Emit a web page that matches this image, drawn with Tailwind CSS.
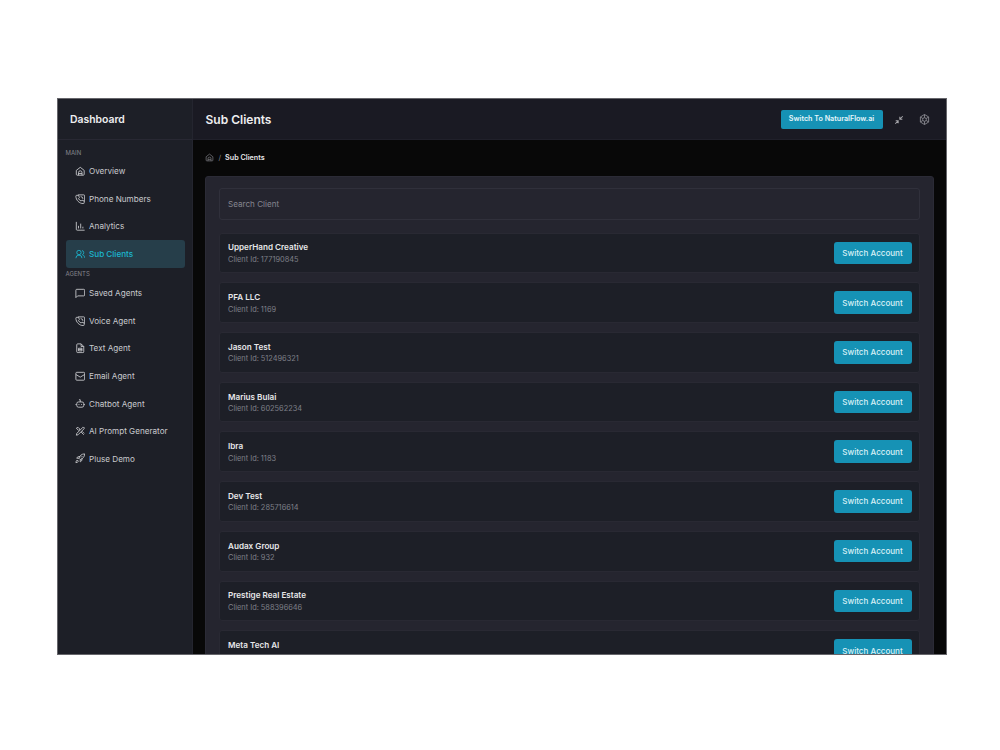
<!DOCTYPE html>
<html lang="en">
<head>
    <meta charset="UTF-8">
    <meta name="viewport" content="width=device-width, initial-scale=1">
    <title>Sub Clients</title>
    <script src="https://cdn.jsdelivr.net/npm/@tailwindcss/browser@4"></script>
</head>
<body class="bg-white font-['Inter',sans-serif]">
    <!-- Icons -->
    <svg class="hidden">
        <symbol id="home" viewBox="0 0 24 24"><path d="M3 10l9-7 9 7v9a2 2 0 0 1-2 2H5a2 2 0 0 1-2-2z"/><path d="M8 21v-6a4 4 0 0 1 8 0v6M8 17h8"/></symbol>
        <symbol id="phone" viewBox="0 0 24 24"><path d="M7 2h13a2 2 0 0 1 2 2v13M13 6a5 5 0 0 1 5 5"/><path d="M8 3H4a2 2 0 0 0-2 2c0 9 8 17 17 17a2 2 0 0 0 2-2v-4l-5-2-2 2c-3-1-5-3-6-6l2-2z"/></symbol>
        <symbol id="chart" viewBox="0 0 24 24"><path d="M3 2v17a2 2 0 0 0 2 2h17M8 17v-6M13 17V6M18 17v-4"/></symbol>
        <symbol id="users" viewBox="0 0 24 24"><circle cx="9" cy="8" r="5"/><path d="M2 21a7 7 0 0 1 14 0M16 3.500a5 5 0 0 1 1 9.500c3 1 5 4 5 7"/></symbol>
        <symbol id="message" viewBox="0 0 24 24"><path d="M22 16a2 2 0 0 1-2 2H6l-4 4V5a2 2 0 0 1 2-2h16a2 2 0 0 1 2 2z"/></symbol>
        <symbol id="file" viewBox="0 0 24 24"><path d="M14 2H6a2 2 0 0 0-2 2v16a2 2 0 0 0 2 2h12a2 2 0 0 0 2-2V8z"/><path d="M14 2v6h6M8 12h8v6H8zM8 15h8"/></symbol>
        <symbol id="mail" viewBox="0 0 24 24"><rect x="2" y="3" width="20" height="18" rx="2"/><path d="M2 8l10 6 10-6"/></symbol>
        <symbol id="bot" viewBox="0 0 24 24"><rect x="4" y="9" width="16" height="12" rx="4"/><path d="M12 9V4H9M1 15h3M20 15h3M9 14v2M15 14v2"/></symbol>
        <symbol id="tools" viewBox="0 0 24 24"><path d="M3 21l4-1L21 6l-3-3L4 17zM3 5l4-2 4 4-3 3zM14 14l6 6M16 12l5 5M19 2l3 3"/></symbol>
        <symbol id="rocket" viewBox="0 0 24 24"><path d="M12 15l-3-3c2-6 6-10 13-10 0 7-4 11-10 13zM9 12H4s1-5 8-4M12 15v5s5-1 4-8M5 16c-2 1-3 5-3 6 1 0 5-1 6-3z"/><path d="M14 10l3-3"/></symbol>
        <symbol id="shrink" viewBox="0 0 24 24"><path d="M14 4v6h6M14 10l7-7M10 20v-6H4M10 14l-7 7"/></symbol>
        <symbol id="gear" viewBox="0 0 24 24"><path d="M12 1l9 5.500v11L12 23l-9-5.500v-11z"/><circle cx="12" cy="12" r="4"/><path d="M12 1v7M12 16v7M3 6.500l5.500 3.500M21 6.500L15.500 10M3 17.500L8.500 14M21 17.500L15.500 14"/></symbol>
    </svg>

    <div class="mx-[57px] mt-[98px] h-[556.500px] w-[889.500px] flex overflow-hidden bg-[#080808] border border-[#66666b]">
        <!-- Sidebar -->
        <aside class="w-[135px] shrink-0 bg-[#1d1f27] border-r border-[#24252f]">
            <div class="h-[41px] pl-3 pt-px flex items-center border-b border-[#282833] text-[10.400px] font-semibold text-[#eeeef0]">Dashboard</div>
            <div class="pl-[7.500px] pr-[7px]">
                <div class="h-[17.700px] pt-[9px] text-[6px] leading-[7px] text-[#85868d]">MAIN</div>
                <nav id="main-nav"></nav>
                <div class="h-[11.800px] pt-[2px] text-[6px] leading-[7px] text-[#85868d]">AGENTS</div>
                <nav id="agents-nav"></nav>
            </div>
        </aside>

        <main class="flex-1 min-w-0">
            <header class="h-[41px] pl-[12.500px] pr-4 pt-px flex items-center bg-[#1a1a23] border-b border-[#20202a]">
                <h1 class="text-[12px] font-semibold text-[#eeeef0]">Sub Clients</h1>
                <button class="ml-auto h-[19.500px] w-[102px] rounded-xs bg-[#1692b5] text-[7.200px] font-semibold text-[#e6f6fa] whitespace-nowrap">Switch To NaturalFlow.ai</button>
                <svg class="ml-[11px] size-[10px] fill-none stroke-[#a5a5aa] stroke-[2.500]"><use href="#shrink"/></svg>
                <svg class="ml-[15px] size-[11px] fill-none stroke-[#85858c] stroke-2"><use href="#gear"/></svg>
            </header>

            <!-- Breadcrumb -->
            <div class="h-[35.500px] pl-3 pt-px flex items-center text-[7.200px] text-[#88888d]">
                <svg class="mb-px size-[9px] fill-none stroke-[#77777c] stroke-2"><use href="#home"/></svg>
                <span class="ml-[4.500px]">/</span>
                <span class="ml-[4px] font-semibold text-[#e5e5e7]">Sub Clients</span>
            </div>

            <section class="ml-3 w-[729px] h-[520px] rounded-[3px] bg-[#25252f] border border-[#2b2b36] pt-[11.500px] px-[13px]">
                <div class="h-[32px] rounded-[3px] border border-[#30303b] pl-2 pt-px flex items-center text-[8.100px] text-[#85868f]">Search Client</div>
                <div id="clients" class="mt-[12.500px] flex flex-col gap-[9px]"></div>
            </section>
        </main>
    </div>

    <script>
        const mainItems = [["home", "Overview"], ["phone", "Phone Numbers"], ["chart", "Analytics"], ["users", "Sub Clients"]];
        const agentItems = [["message", "Saved Agents"], ["phone", "Voice Agent"], ["file", "Text Agent"], ["mail", "Email Agent"], ["bot", "Chatbot Agent"], ["tools", "AI Prompt Generator"], ["rocket", "Pluse Demo"]];
        const clients = [
            ["UpperHand Creative", "Client Id: 177190845"],
            ["PFA LLC", "Client Id: 1169"],
            ["Jason Test", "Client Id: 512496321"],
            ["Marius Bulai", "Client Id: 602562234"],
            ["Ibra", "Client Id: 1183"],
            ["Dev Test", "Client Id: 285716614"],
            ["Audax Group", "Client Id: 932"],
            ["Prestige Real Estate", "Client Id: 588396646"],
            ["Meta Tech AI", ""]
        ];

        function navItem([icon, label]) {
            const state = label === "Sub Clients"
                ? "bg-[#263e4a] text-[#1cb6cf] font-medium"
                : "text-[#c9cace]";
            return `<a class="h-[27.550px] pl-[9px] flex items-center gap-[4px] rounded-[3px] text-[8.150px] whitespace-nowrap ${state}">
                <svg class="size-[10.500px] fill-none stroke-current stroke-2"><use href="#${icon}"/></svg>${label}</a>`;
        }

        document.getElementById("main-nav").innerHTML = mainItems.map(navItem).join("");
        document.getElementById("agents-nav").innerHTML = agentItems.map(navItem).join("");
        document.getElementById("clients").innerHTML = clients.map(([name, id]) => `
            <div class="h-[40.720px] shrink-0 pl-2 pr-[7.500px] flex items-center justify-between rounded-[3px] bg-[#1d1f27] border border-[#292933]">
                <div class="pt-[1.500px]">
                    <div class="h-[11.500px] text-[8.150px] leading-[11.500px] font-semibold text-[#e8e8ea]">${name}</div>
                    <div class="h-[11px] text-[7.400px] leading-[11px] text-[#7e7f87]">${id}</div>
                </div>
                <button class="h-[22.500px] w-[78px] rounded-[3px] bg-[#1692b5] text-[8.050px] font-medium text-[#d9f0f6]">Switch Account</button>
            </div>`).join("");
    </script>
</body>
</html>
